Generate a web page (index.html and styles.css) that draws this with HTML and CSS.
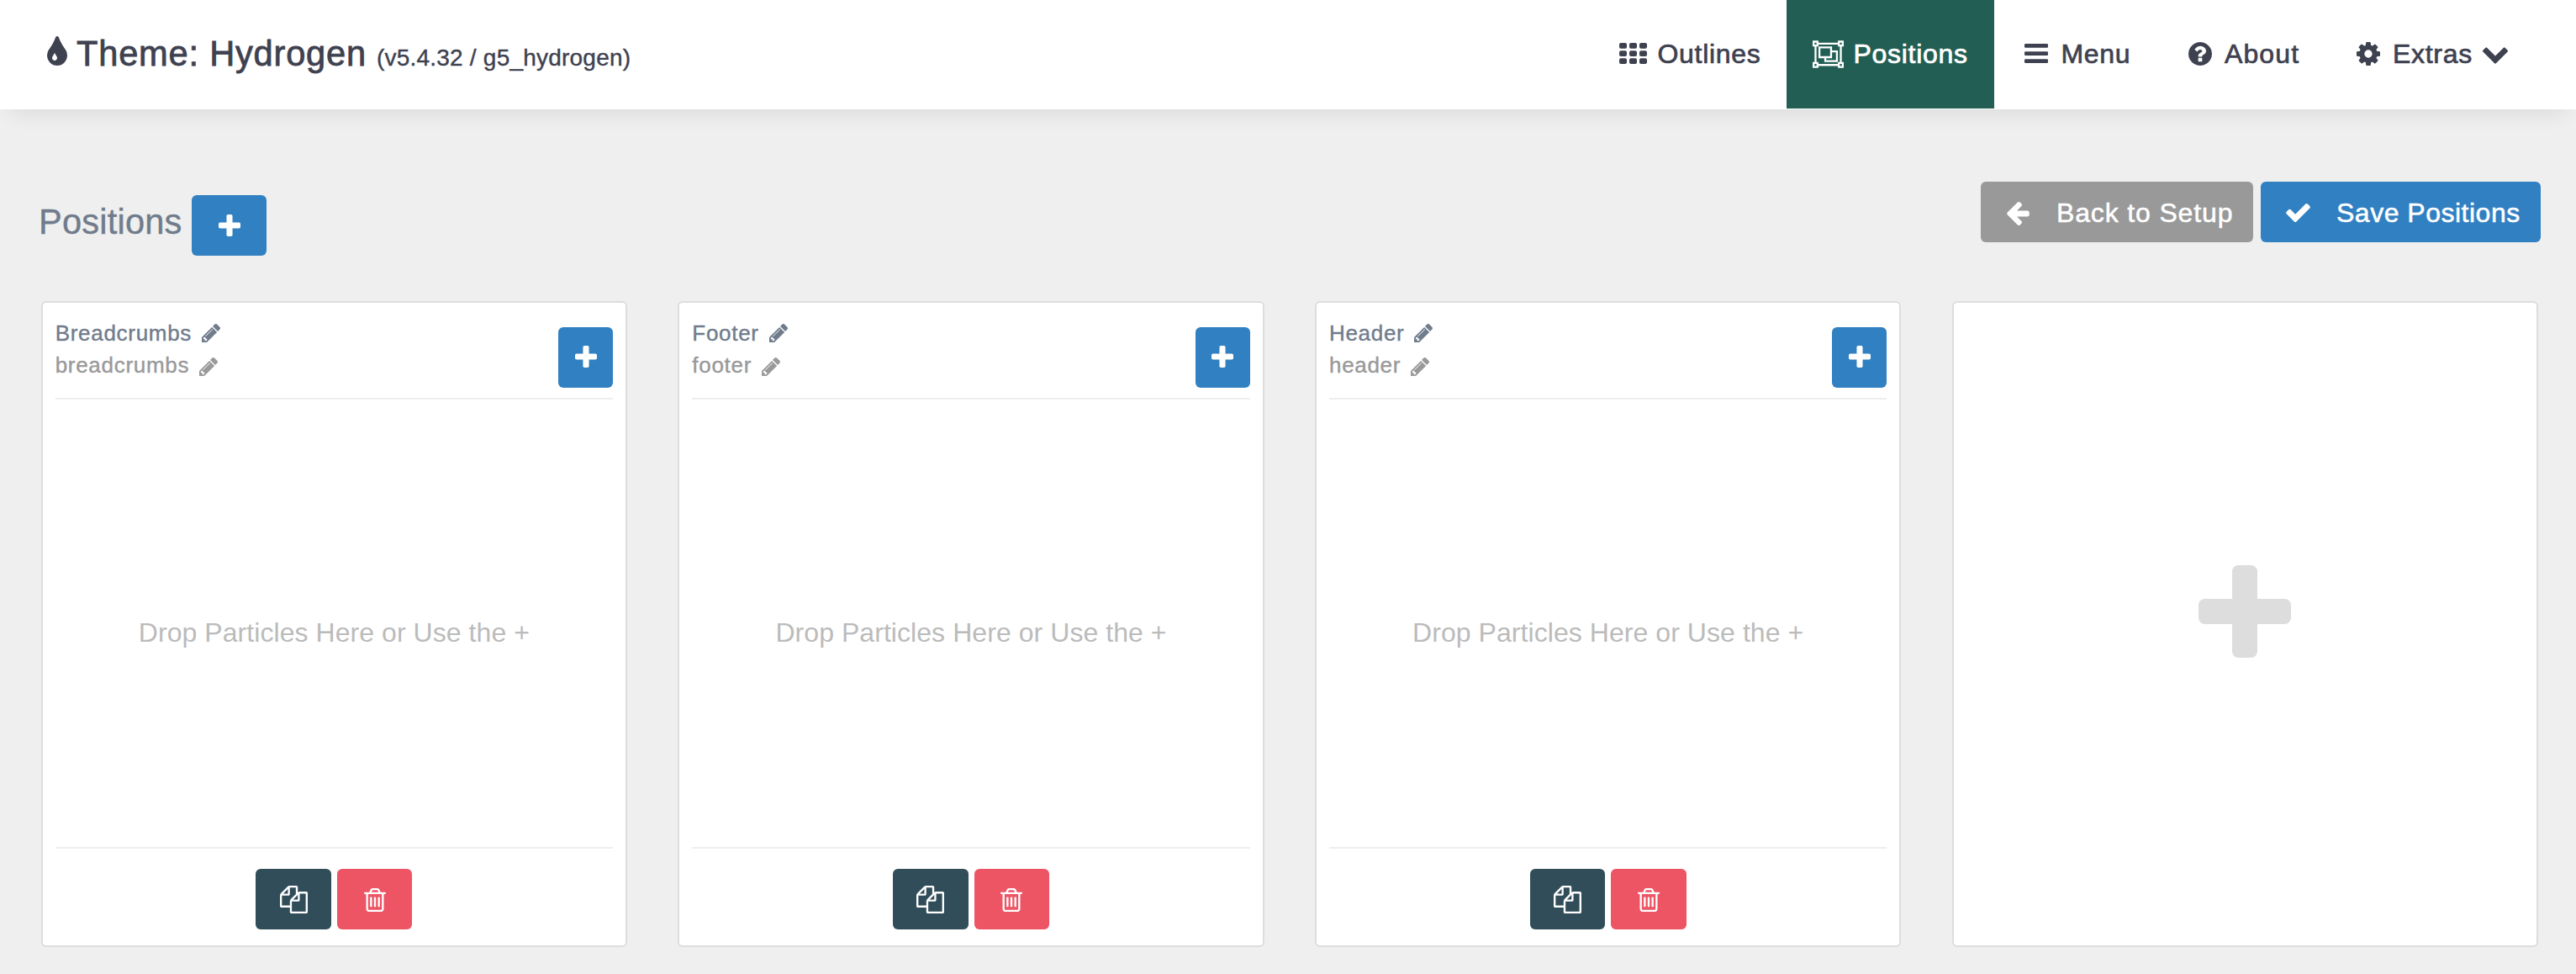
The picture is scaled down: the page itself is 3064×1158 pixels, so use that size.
FILE: index.html
```html
<!DOCTYPE html>
<html lang="en">
<head>
<meta charset="utf-8">
<title>Positions</title>
<link rel="stylesheet" href="styles.css">
</head>
<body>
<svg class="sprite" aria-hidden="true">
  <symbol id="tint" viewBox="0 64 1024 1472" preserveAspectRatio="none"><path d="M512 1152q0-36-20-69-1-1-15.500-22.500t-25.500-38-25-44-21-50.500q-4-16-21-16t-21 16q-7 23-21 50.500t-25 44-25.500 38-15.500 22.500q-20 33-20 69 0 53 37.500 90.500t90.500 37.500 90.500-37.500 37.500-90.500zm512-128q0 212-150 362t-362 150-362-150-150-362q0-145 81-275 6-9 62.500-90.500t101-151 99.500-178 83-201.500q9-30 34-47t51-17 51.500 17 33.500 47q28 93 83 201.500t99.500 178 101 151 62.500 90.500q81 127 81 275z"/></symbol>
  <symbol id="group" viewBox="0 0 2048 1792"><path fill-rule="evenodd" d="M2048 384h-128v1024h128v384h-384v-128h-1280v128h-384v-384h128v-1024h-128v-384h384v128h1280v-128h384zM1664 1536v-128h128v-1024h-128v-128h-1280v128h-128v1024h128v128zM128 128v128h128v-128zM1792 128v128h128v-128zM128 1536v128h128v-128zM1792 1536v128h128v-128zM384 384h896v256h384v768h-896v-256h-384zM512 512v512h640v-512zM1280 768v384h-384v128h640v-512z"/></symbol>
  <symbol id="question" viewBox="128 128 1536 1536"><path d="M1024 1376v-192q0-14-9-23t-23-9h-192q-14 0-23 9t-9 23v192q0 14 9 23t23 9h192q14 0 23-9t9-23zm256-672q0-88-55.500-163t-138.500-116-170-41q-243 0-371 213-15 24 8 42l132 100q7 6 19 6 16 0 25-12 53-68 86-92 34-24 86-24 48 0 85.500 26t37.500 59q0 38-20 61t-68 45q-63 28-115.500 86.500t-52.500 125.500v36q0 14 9 23t23 9h192q14 0 23-9t9-23q0-19 21.500-49.500t54.500-49.500q32-18 49-28.500t46-35 44.500-48 28-60.500 12.500-81zm384 192q0 209-103 385.500t-279.500 279.500-385.500 103-385.500-103-279.500-279.500-103-385.500 103-385.500 279.500-279.500 385.500-103 385.500 103 279.500 279.500 103 385.500z"/></symbol>
  <symbol id="cog" viewBox="128 128 1536 1536"><path d="M1152 896q0-106-75-181t-181-75-181 75-75 181 75 181 181 75 181-75 75-181zm512-109v222q0 12-8 23t-20 13l-185 28q-19 54-39 91 35 50 107 138 10 12 10 25t-9 23q-27 37-99 108t-94 71q-12 0-26-9l-138-108q-44 23-91 38-16 136-29 186-7 28-36 28h-222q-14 0-24.500-8.500t-11.500-21.500l-28-184q-49-16-90-37l-141 107q-10 9-25 9-14 0-25-11-126-114-165-168-7-10-7-23 0-12 8-23 15-21 51-66.500t54-70.500q-27-50-41-99l-183-27q-13-2-21-12.500t-8-23.500v-222q0-12 8-23t19-13l186-28q14-46 39-92-40-57-107-138-10-12-10-24 0-10 9-23 26-36 98.500-107.500t94.500-71.500q13 0 26 10l138 107q44-23 91-38 16-136 29-186 7-28 36-28h222q14 0 24.500 8.500t11.500 21.500l28 184q49 16 90 37l142-107q9-9 24-9 13 0 25 10 129 119 165 170 7 8 7 22 0 12-8 23-15 21-51 66.500t-54 70.500q26 50 41 98l183 28q13 2 21 12.500t8 23.500z"/></symbol>
  <symbol id="chevron" viewBox="90 533 1612 1035"><path d="M1683 808l-742 741q-19 19-45 19t-45-19l-742-741q-19-19-19-45.500t19-45.500l166-165q19-19 45-19t45 19l531 531 531-531q19-19 45-19t45 19l166 165q19 19 19 45.500t-19 45.500z"/></symbol>
  <symbol id="check" viewBox="121 334 1550 1188"><path d="M1671 566q0 40-28 68l-724 724-136 136q-28 28-68 28t-68-28l-136-136-362-362q-28-28-28-68t28-68l136-136q28-28 68-28t68 28l294 295 656-657q28-28 68-28t68 28l136 136q28 28 28 68z"/></symbol>
  <symbol id="arrow" viewBox="192 181 1472 1558"><path d="M1664 896v128q0 53-32.500 90.500t-84.500 37.500h-704l293 294q38 36 38 90t-38 90l-75 76q-37 37-90 37-52 0-91-37l-651-652q-37-37-37-90 0-52 37-91l651-650q38-38 91-38 52 0 90 38l75 74q38 38 38 91t-38 91l-293 293h704q52 0 84.500 37.500t32.500 90.500z"/></symbol>
  <symbol id="pencil" viewBox="128 149 1515 1515"><path d="M491 1536l91-91-235-235-91 91v107h128v128h107zm523-928q0-22-22-22-10 0-17 7l-542 542q-7 7-7 17 0 22 22 22 10 0 17-7l542-542q7-7 7-17zm-54-192l416 416-832 832h-416v-416zm683 96q0 53-37 90l-166 166-416-416 166-165q36-38 90-38 53 0 91 38l235 234q37 39 37 91z"/></symbol>
  <symbol id="copy" viewBox="0 0 1792 1792"><path d="M1696 384q40 0 68 28t28 68v1216q0 40-28 68t-68 28h-960q-40 0-68-28t-28-68v-288h-544q-40 0-68-28t-28-68v-672q0-40 20-88t48-76l408-408q28-28 76-48t88-20h416q40 0 68 28t28 68v328q68-40 128-40h416zm-544 213l-299 299h299v-299zm-640-384l-299 299h299v-299zm196 647l316-316v-416h-384v416q0 40-28 68t-68 28h-416v640h512v-256q0-40 20-88t48-76zm956 804v-1152h-384v416q0 40-28 68t-68 28h-416v640h896z"/></symbol>
  <symbol id="trash" viewBox="192 128 1408 1536"><path d="M704 736v576q0 14-9 23t-23 9h-64q-14 0-23-9t-9-23v-576q0-14 9-23t23-9h64q14 0 23 9t9 23zm256 0v576q0 14-9 23t-23 9h-64q-14 0-23-9t-9-23v-576q0-14 9-23t23-9h64q14 0 23 9t9 23zm256 0v576q0 14-9 23t-23 9h-64q-14 0-23-9t-9-23v-576q0-14 9-23t23-9h64q14 0 23 9t9 23zm128 724v-948h-896v948q0 22 7 40.500t14.500 27 10.500 8.500h832q3 0 10.500-8.500t14.500-27 7-40.500zm-672-1076h448l-48-117q-7-9-17-11h-317q-10 2-17 11zm928 32v64q0 14-9 23t-23 9h-96v948q0 83-47 143.500t-113 60.500h-832q-66 0-113-58.500t-47-141.500v-952h-96q-14 0-23-9t-9-23v-64q0-14 9-23t23-9h309l70-167q15-37 54-63t79-26h320q40 0 79 26t54 63l70 167h309q14 0 23 9t9 23z"/></symbol>
  <symbol id="plus" viewBox="0 0 110 110"><rect x="40" width="30" height="110" rx="7.500"/><rect y="40" width="110" height="30" rx="7.500"/></symbol>
  <symbol id="grid" viewBox="0 0 33 25"><rect width="9" height="6.700" rx="2"/><rect x="12" width="9" height="6.700" rx="2"/><rect x="24" width="9" height="6.700" rx="2"/><rect y="9.200" width="9" height="6.700" rx="2"/><rect x="12" y="9.200" width="9" height="6.700" rx="2"/><rect x="24" y="9.200" width="9" height="6.700" rx="2"/><rect y="18.300" width="9" height="6.700" rx="2"/><rect x="12" y="18.300" width="9" height="6.700" rx="2"/><rect x="24" y="18.300" width="9" height="6.700" rx="2"/></symbol>
  <symbol id="bars" viewBox="0 0 28 23"><rect width="28" height="4.700" rx="1.200"/><rect y="9.200" width="28" height="4.700" rx="1.200"/><rect y="18.300" width="28" height="4.700" rx="1.200"/></symbol>
</svg>

<header class="topbar">
  <h1 class="brand"><svg class="i-tint"><use href="#tint"/></svg><span class="theme">Theme: Hydrogen</span><small>(v5.4.32 / g5_hydrogen)</small></h1>
  <nav class="nav">
    <a class="nav-item"><span class="nav-icon"><svg class="i-grid"><use href="#grid"/></svg></span><span class="label">Outlines</span></a>
    <a class="nav-item active"><span class="nav-icon"><svg class="i-group"><use href="#group"/></svg></span><span class="label">Positions</span></a>
    <a class="nav-item"><span class="nav-icon"><svg class="i-bars"><use href="#bars"/></svg></span><span class="label">Menu</span></a>
    <a class="nav-item"><span class="nav-icon"><svg class="i-round"><use href="#question"/></svg></span><span class="label about">About</span></a>
    <a class="nav-item"><span class="nav-icon"><svg class="i-round"><use href="#cog"/></svg></span><span class="label">Extras</span><svg class="i-chevron"><use href="#chevron"/></svg></a>
  </nav>
</header>

<main>
  <div class="toolbar">
    <h2 class="heading">Positions</h2>
    <button class="btn blue square"><svg class="i-plus"><use href="#plus"/></svg></button>
    <div class="actions">
      <button class="btn grey back"><svg class="i-arrow"><use href="#arrow"/></svg><span>Back to Setup</span></button>
      <button class="btn blue save"><svg class="i-check"><use href="#check"/></svg><span>Save Positions</span></button>
    </div>
  </div>

  <div class="cards">
    <section class="card">
      <div class="card-head">
        <div class="names"><div class="title"><span>Breadcrumbs</span><svg class="i-pencil"><use href="#pencil"/></svg></div><div class="slug"><span>breadcrumbs</span><svg class="i-pencil"><use href="#pencil"/></svg></div></div>
        <button class="btn blue add"><svg class="i-plus"><use href="#plus"/></svg></button>
      </div>
      <div class="drop">Drop Particles Here or Use the +</div>
      <div class="card-foot"><button class="btn dark square"><svg class="i-copy"><use href="#copy"/></svg></button><button class="btn red square"><svg class="i-trash"><use href="#trash"/></svg></button></div>
    </section>
    <section class="card">
      <div class="card-head">
        <div class="names"><div class="title"><span>Footer</span><svg class="i-pencil"><use href="#pencil"/></svg></div><div class="slug"><span>footer</span><svg class="i-pencil"><use href="#pencil"/></svg></div></div>
        <button class="btn blue add"><svg class="i-plus"><use href="#plus"/></svg></button>
      </div>
      <div class="drop">Drop Particles Here or Use the +</div>
      <div class="card-foot"><button class="btn dark square"><svg class="i-copy"><use href="#copy"/></svg></button><button class="btn red square"><svg class="i-trash"><use href="#trash"/></svg></button></div>
    </section>
    <section class="card">
      <div class="card-head">
        <div class="names"><div class="title"><span>Header</span><svg class="i-pencil"><use href="#pencil"/></svg></div><div class="slug"><span>header</span><svg class="i-pencil"><use href="#pencil"/></svg></div></div>
        <button class="btn blue add"><svg class="i-plus"><use href="#plus"/></svg></button>
      </div>
      <div class="drop">Drop Particles Here or Use the +</div>
      <div class="card-foot"><button class="btn dark square"><svg class="i-copy"><use href="#copy"/></svg></button><button class="btn red square"><svg class="i-trash"><use href="#trash"/></svg></button></div>
    </section>
    <section class="card new"><svg class="i-new"><use href="#plus"/></svg></section>
  </div>
</main>
</body>
</html>
```
FILE: styles.css
```css
* { box-sizing: border-box; }
body {
  margin: 0;
  height: 1158px;
  overflow: hidden;
  background: #efefef;
  color: #3e414f;
  font-family: "Liberation Sans", Arial, sans-serif;
  font-size: 32px;
  white-space: nowrap;
}
h1, h2 { margin: 0; font-weight: 400; }
svg { display: block; flex: none; fill: currentColor; }
.sprite { display: none; }

.topbar {
  display: flex;
  justify-content: space-between;
  height: 130px;
  padding: 0 50px 1px 56px;
  background: #fff;
  box-shadow: 0 16px 24px -12px rgba(0, 0, 0, .09);
}
.brand {
  display: flex;
  align-items: baseline;
  font-size: 41.600px;
  line-height: 127px;
  letter-spacing: .800px;
  -webkit-text-stroke: .8px currentColor;
}
.brand small { margin-left: 12px; font-size: 28px; letter-spacing: .220px; -webkit-text-stroke-width: .4px; }
.i-tint { width: 24px; height: 35px; margin-right: 11px; }

.nav { display: grid; grid-template-columns: 233px 247px 194.500px 200px 248px; }
.nav-item { display: flex; align-items: center; padding-left: 30px; line-height: 127px; }
.nav-item.active { background: #225e53; color: #fff; }
.nav-icon { display: flex; justify-content: center; width: 41px; margin-right: 9px; }
.active .nav-icon { padding-right: 2px; }
.label { letter-spacing: .700px; -webkit-text-stroke: .7px currentColor; }
.about { letter-spacing: 1.100px; }
.i-grid { width: 33px; height: 25px; margin-bottom: 3px; }
.i-group { width: 37px; height: 33px; margin-bottom: 1px; }
.i-bars { width: 28px; height: 23px; margin-bottom: 2px; }
.i-round { width: 28px; height: 28px; margin-bottom: 2px; }
.i-chevron { width: 30px; height: 20px; margin: 2px 0 0 12px; }

.toolbar { display: flex; align-items: flex-start; height: 228px; padding: 86px 42px 0 46px; }
.heading {
  width: 182px;
  color: #707c8c;
  font-size: 41.600px;
  line-height: 96px;
  letter-spacing: .200px;
  -webkit-text-stroke: .4px currentColor;
}
.toolbar > .square { margin-top: 16px; }
.actions { display: flex; gap: 9px; margin-left: auto; }
.btn {
  display: flex;
  align-items: center;
  justify-content: center;
  height: 72px;
  padding: 0;
  border: 0;
  border-radius: 6px;
  color: #fff;
  font: 32px "Liberation Sans", Arial, sans-serif;
  -webkit-text-stroke: .5px currentColor;
}
.btn svg { stroke: none; }
.btn span { padding-top: 2px; }
.blue { background: #3180c2; }
.grey { background: #999; }
.dark { background: #314d59; }
.red { background: #ed5565; }
.square { width: 89px; }
.back { width: 324px; justify-content: flex-start; padding-left: 31px; letter-spacing: .850px; }
.save { width: 333px; justify-content: flex-start; padding-left: 30px; letter-spacing: .500px; }
.i-arrow { width: 27px; height: 28px; margin: 4px 32px 0 0; }
.i-check { width: 29px; height: 22px; margin: 1px 31px 0 0; }
.i-plus { width: 26px; height: 26px; }

.cards {
  display: grid;
  grid-template-columns: repeat(4, 1fr);
  gap: 60.300px;
  padding: 0 45px 0 48.700px;
}
.card {
  display: flex;
  flex-direction: column;
  height: 768px;
  padding: 15px;
  border: 2px solid #ddd;
  border-radius: 6px;
  background: #fff;
}
.card-head {
  display: flex;
  justify-content: space-between;
  height: 100px;
  border-bottom: 2px solid #eee;
}
.names { padding-top: 2px; font-size: 26px; line-height: 38px; letter-spacing: .700px; }
.title, .slug { display: flex; align-items: center; }
.title { color: #707c8c; -webkit-text-stroke: .4px currentColor; }
.slug { color: #999; -webkit-text-stroke: .4px currentColor; }
.i-pencil { width: 22px; height: 22px; margin-left: 12px; }
.slug .i-pencil { margin-top: 4px; }
.add { width: 65px; margin-top: 14px; }
.add .i-plus { margin-bottom: 2px; }
.drop {
  flex: 1;
  display: flex;
  align-items: center;
  justify-content: center;
  padding-top: 23px;
  color: #bbb;
  letter-spacing: .060px;
}
.card-foot {
  display: flex;
  justify-content: center;
  gap: 7px;
  height: 102px;
  padding-top: 24px;
  border-top: 2px solid #eee;
}
.card-foot .square { width: 89.500px; }
.i-copy { width: 33px; height: 33px; }
.i-trash { width: 26px; height: 28px; margin-top: 2px; }
.new { align-items: center; justify-content: center; color: #ddd; }
.i-new { width: 110px; height: 110px; margin-bottom: 30px; }
```
